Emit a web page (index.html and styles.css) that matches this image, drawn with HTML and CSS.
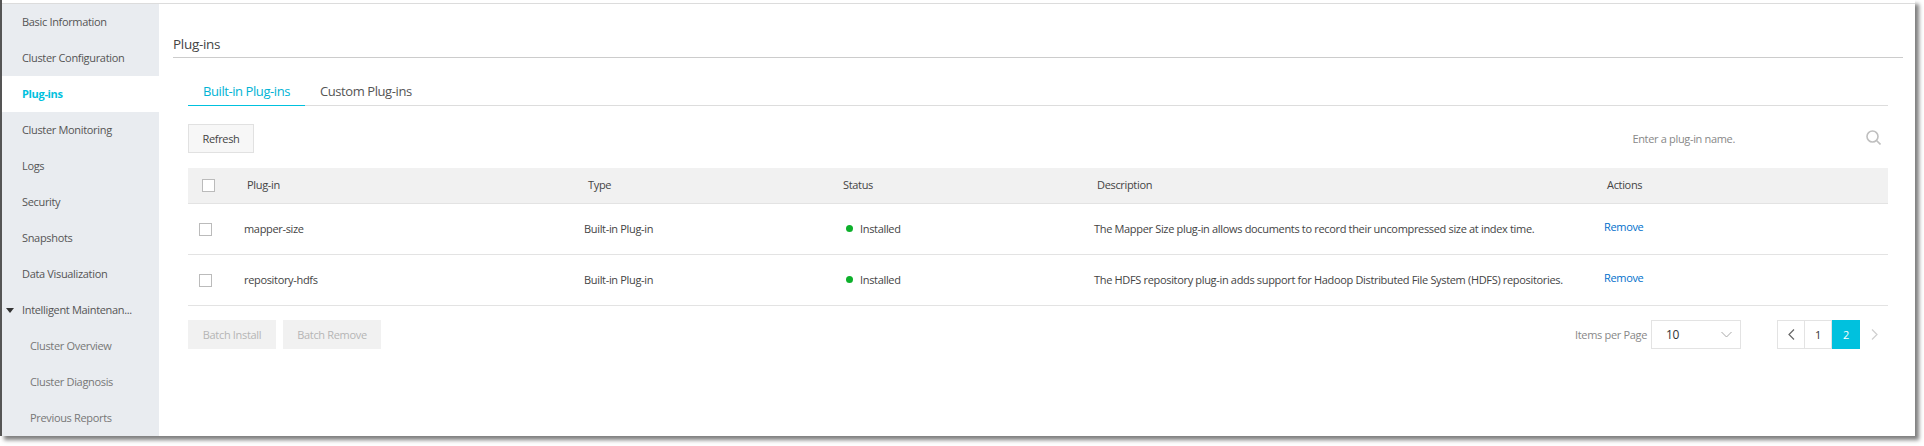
FILE: index.html
```html
<!DOCTYPE html>
<html lang="en">
<head>
<meta charset="utf-8">
<title>Plug-ins</title>
<link rel="stylesheet" href="styles.css">
</head>
<body>
<div class="frame">
  <nav class="side">
    <a class="item">Basic Information</a>
    <a class="item">Cluster Configuration</a>
    <a class="item active">Plug-ins</a>
    <a class="item">Cluster Monitoring</a>
    <a class="item">Logs</a>
    <a class="item">Security</a>
    <a class="item">Snapshots</a>
    <a class="item">Data Visualization</a>
    <a class="item parent"><span class="caret"></span>Intelligent Maintenan...</a>
    <a class="item sub">Cluster Overview</a>
    <a class="item sub">Cluster Diagnosis</a>
    <a class="item sub">Previous Reports</a>
  </nav>
  <main class="main">
    <h2 class="title">Plug-ins</h2>
    <div class="panel">
      <div class="tabs">
        <a class="tab on">Built-in Plug-ins</a>
        <a class="tab">Custom Plug-ins</a>
      </div>
      <div class="toolbar">
        <button class="btn">Refresh</button>
        <div class="search">
          <span class="placeholder">Enter a plug-in name.</span>
          <svg class="search-icon" width="15" height="15" viewBox="0 0 15 15" fill="none" stroke="#bfbfbf" stroke-width="1.6"><circle cx="6.500" cy="6.500" r="5.500"/><path d="M10.500 10.500l4 4"/></svg>
        </div>
      </div>
      <div class="thead">
        <span class="check"></span>
        <span>Plug-in</span>
        <span>Type</span>
        <span>Status</span>
        <span>Description</span>
        <span>Actions</span>
      </div>
      <div class="row">
        <span class="check"></span>
        <span>mapper-size</span>
        <span>Built-in Plug-in</span>
        <span class="status"><i class="dot"></i>Installed</span>
        <span>The Mapper Size plug-in allows documents to record their uncompressed size at index time.</span>
        <a class="link">Remove</a>
      </div>
      <div class="row">
        <span class="check"></span>
        <span>repository-hdfs</span>
        <span>Built-in Plug-in</span>
        <span class="status"><i class="dot"></i>Installed</span>
        <span>The HDFS repository plug-in adds support for Hadoop Distributed File System (HDFS) repositories.</span>
        <a class="link">Remove</a>
      </div>
      <div class="foot">
        <div class="batch">
          <button class="btn off w1">Batch Install</button>
          <button class="btn off w2">Batch Remove</button>
        </div>
        <div class="pager">
          <span class="ipp">Items per Page</span>
          <div class="select"><span>10</span>
            <svg width="11" height="7" viewBox="0 0 11 7" fill="none" stroke="#a8a8a8"><path d="M.5 1l5 5 5-5"/></svg>
          </div>
          <div class="pages">
            <span class="pg prev"><svg width="7" height="11" viewBox="0 0 7 11" fill="none" stroke="#666" stroke-width="1.2"><path d="M6 .5L1 5.500l5 5"/></svg></span>
            <span class="pg num">1</span>
            <span class="pg cur">2</span>
            <span class="pg next"><svg width="7" height="11" viewBox="0 0 7 11" fill="none" stroke="#cfcfcf" stroke-width="1.2"><path d="M1 .5l5 5-5 5"/></svg></span>
          </div>
        </div>
      </div>
    </div>
  </main>
</div>
</body>
</html>
```
FILE: styles.css
```css
* { box-sizing: border-box; }
html, body { margin: 0; padding: 0; background: #fff; }
body { font-family: "Open Sans", sans-serif; font-size: 11px; letter-spacing: -0.33px; color: #333; width: 1924px; height: 446px; overflow: hidden; }
.frame { display: flex; width: 1915px; height: 436px; padding-top: 4px; border-left: 2px solid #555; background: linear-gradient(#dcdcdc, #dcdcdc) 0 3px / 100% 1px no-repeat #fff; box-shadow: 4px 4px 4px rgba(0, 0, 0, .5); }
.side { width: 157px; flex: none; background: #e9ecf0; display: flex; flex-direction: column; }
.item { height: 36px; line-height: 35px; padding-left: 20px; color: #555; white-space: nowrap; }
.item.active { background: #fff; color: #00c1de; font-weight: 700; }
.item.parent { padding-left: 4px; }
.item.sub { padding-left: 28px; color: #777; }
.caret { display: inline-block; width: 0; height: 0; border: 4px solid transparent; border-top: 5px solid #333; border-bottom: 0; margin-right: 8px; vertical-align: 1px; }
.main { flex: 1; padding-left: 14px; min-width: 0; }
.title { margin: 22px 0 0; width: 1730px; height: 32px; line-height: 36px; font-size: 13.500px; letter-spacing: -0.3px; font-weight: 400; color: #444; border-bottom: 1px solid #ccc; }
.panel { width: 1700px; margin-left: 15px; }
.tabs { display: flex; height: 48px; padding-top: 19px; border-bottom: 1px solid #ddd; font-size: 13px; letter-spacing: -0.42px; }
.tab { padding: 0 15px; height: 29px; line-height: 28px; color: #555; }
.tab.on { color: #00b3d4; border-bottom: 1px solid #00c1de; }
.toolbar { display: flex; justify-content: space-between; align-items: center; margin-top: 18px; height: 29px; }
.btn { font: inherit; letter-spacing: inherit; height: 29px; width: 66px; padding: 0; background: #f7f7f7; border: 1px solid #e1e1e1; color: #444; }
.search { display: flex; align-items: center; color: #888; }
.placeholder { margin-right: 131px; }
.search-icon { margin-right: 7px; margin-top: -3px; }
.thead, .row { display: grid; align-items: center; white-space: nowrap; color: #444; }
.thead { margin-top: 15px; height: 36px; padding: 0 0 2px 14px; background: #f1f1f1; border-bottom: 1px solid #e3e3e3; grid-template-columns: 45px 341px 255px 254px 510px 1fr; }
.row { height: 51px; padding: 0 0 2px 11px; border-bottom: 1px solid #e3e3e3; grid-template-columns: 45px 340px 262px 248px 510px 1fr; }
.check { width: 13px; height: 13px; border: 1px solid #bbb; background: #fff; margin-top: 2px; }
.status { display: flex; align-items: center; }
.dot { width: 7px; height: 7px; border-radius: 50%; background: #0db02b; margin-right: 7px; }
.link { color: #0070cc; margin-top: -3px; }
.foot { display: flex; justify-content: space-between; align-items: flex-start; margin-top: 14px; height: 30px; }
.batch { display: flex; gap: 7px; }
.btn.off { background: #f1f1f1; border-color: #f1f1f1; color: #b5b5b5; }
.w1 { width: 88px; }
.w2 { width: 98px; }
.pager { display: flex; align-items: center; }
.ipp { color: #888; margin-right: 4px; }
.select { width: 90px; height: 29px; border: 1px solid #e3e3e3; display: flex; align-items: center; justify-content: space-between; padding: 0 8px 0 14px; margin-right: 36px; font-size: 12px; }
.pages { display: flex; margin-top: -1px; }
.pg { width: 28px; height: 29px; display: flex; align-items: center; justify-content: center; }
.prev, .num { border: 1px solid #e3e3e3; }
.num { border-left: 0; width: 27px; color: #333; }
.cur { background: #00c1de; color: #fff; }
```
